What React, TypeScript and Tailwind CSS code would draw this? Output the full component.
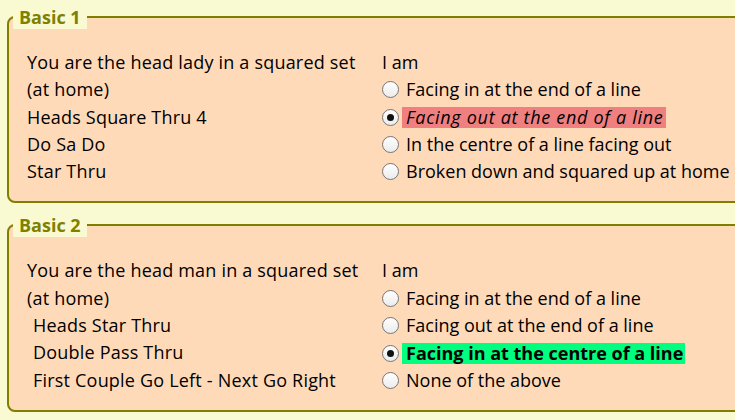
import React from "react";

type Opt = { text: string; checked?: boolean; hl?: "red" | "green" };

function Radio({ checked }: { checked?: boolean }) {
  return (
    <span className="flex h-[17px] w-[17px] shrink-0 items-center justify-center rounded-full border border-[#767676] bg-gradient-to-b from-[#ffffff] to-[#ececec]">
      {checked ? <span className="h-[7px] w-[7px] rounded-full bg-[#111]" /> : null}
    </span>
  );
}

function Box({
  title,
  left,
  indent,
  opts,
  className,
}: {
  title: string;
  left: string[];
  indent?: boolean;
  opts: Opt[];
  className?: string;
}) {
  return (
    <fieldset
      className={
        "m-0 w-[800px] rounded-l-[8px] border-2 border-[#808000] bg-[#ffdab9] p-0 " +
        (className ?? "")
      }
    >
      <legend className="ml-[4px] bg-[#fafad2] px-[6px] text-[18px] font-bold leading-[24px] text-[#808000]">
        {title}
      </legend>
      <div className="flex pl-[18px] pt-[20px] pb-[16px] text-[18px] text-black">
        <div className="w-[355px] tracking-[0.2px]">
          {left.map((t, i) => (
            <div
              key={i}
              className={
                "h-[27.3px] whitespace-nowrap leading-[27.3px] " +
                (indent && i >= 2 ? "pl-[6px]" : "")
              }
            >
              {t}
            </div>
          ))}
        </div>
        <div>
          <div className="h-[27.3px] leading-[27.3px]">I am</div>
          {opts.map((o, i) => (
            <div key={i} className="flex h-[27.3px] items-center">
              <Radio checked={o.checked} />
              {o.hl === "red" ? (
                <span className="ml-[3px] bg-[#f08080] pr-[2px] pl-[4px] italic leading-[21px] tracking-[0.7px] whitespace-nowrap">
                  {o.text}
                </span>
              ) : o.hl === "green" ? (
                <span className="ml-[3px] bg-[#00ff7f] pr-[2px] pl-[4px] font-bold leading-[21px] whitespace-nowrap">
                  {o.text}
                </span>
              ) : (
                <span className="ml-[7px] whitespace-nowrap leading-[21px]">{o.text}</span>
              )}
            </div>
          ))}
        </div>
      </div>
    </fieldset>
  );
}

export default function App() {
  return (
    <div
      className="h-[420px] w-[735px] overflow-hidden bg-[#fafad2] pt-[5px] pl-[7px]"
      style={{ fontFamily: '"Open Sans", "Noto Sans", sans-serif' }}
    >
      <Box
        title="Basic 1"
        left={[
          "You are the head lady in a squared set",
          "(at home)",
          "Heads Square Thru 4",
          "Do Sa Do",
          "Star Thru",
        ]}
        opts={[
          { text: "Facing in at the end of a line" },
          { text: "Facing out at the end of a line", checked: true, hl: "red" },
          { text: "In the centre of a line facing out" },
          { text: "Broken down and squared up at home" },
        ]}
      />
      <Box
        className="mt-[10px]"
        title="Basic 2"
        indent
        left={[
          "You are the head man in a squared set",
          "(at home)",
          "Heads Star Thru",
          "Double Pass Thru",
          "First Couple Go Left - Next Go Right",
        ]}
        opts={[
          { text: "Facing in at the end of a line" },
          { text: "Facing out at the end of a line" },
          { text: "Facing in at the centre of a line", checked: true, hl: "green" },
          { text: "None of the above" },
        ]}
      />
    </div>
  );
}
